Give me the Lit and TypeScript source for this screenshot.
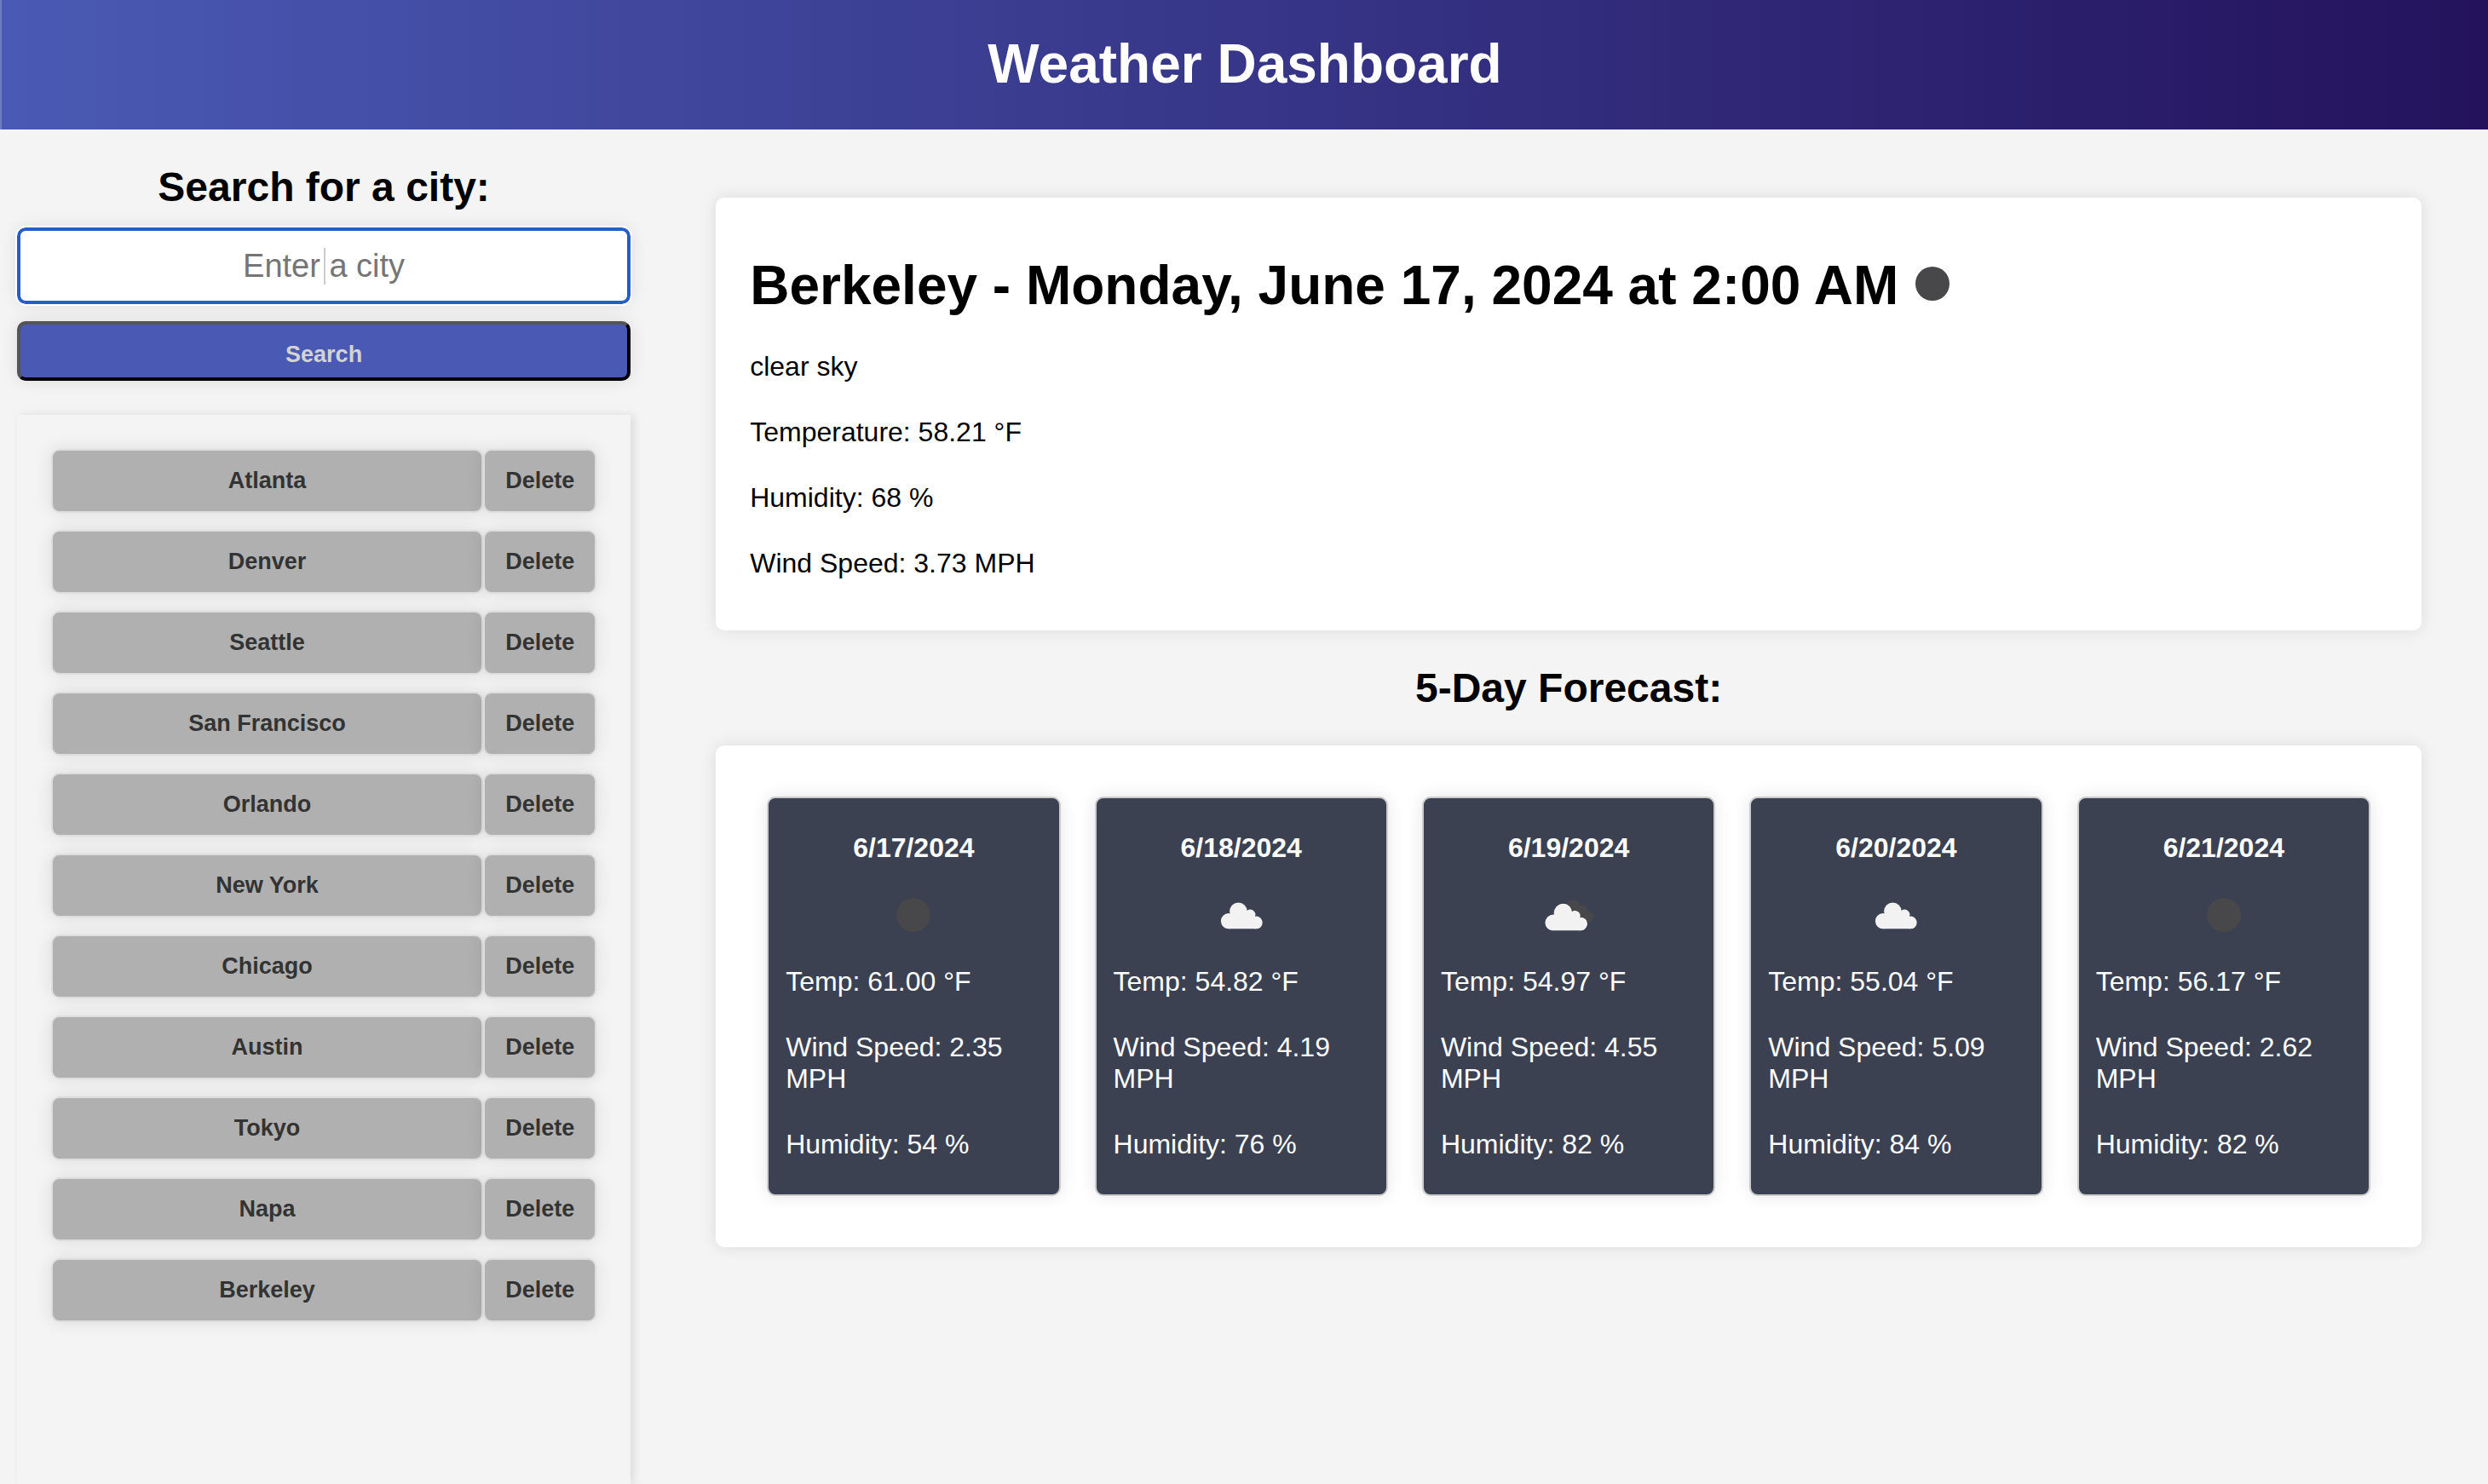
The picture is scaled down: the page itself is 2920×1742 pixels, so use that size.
import { LitElement, html, css, svg } from "lit";
import { customElement, property, state } from "lit/decorators.js";

type Sky = "clear" | "cloud" | "broken";

interface Day {
  date: string;
  sky: Sky;
  temp: string;
  wind: string;
  humidity: number;
}

const CITIES = [
  "Atlanta",
  "Denver",
  "Seattle",
  "San Francisco",
  "Orlando",
  "New York",
  "Chicago",
  "Austin",
  "Tokyo",
  "Napa",
  "Berkeley",
];

const DAYS: Day[] = [
  { date: "6/17/2024", sky: "clear", temp: "61.00", wind: "2.35", humidity: 54 },
  { date: "6/18/2024", sky: "cloud", temp: "54.82", wind: "4.19", humidity: 76 },
  { date: "6/19/2024", sky: "broken", temp: "54.97", wind: "4.55", humidity: 82 },
  { date: "6/20/2024", sky: "cloud", temp: "55.04", wind: "5.09", humidity: 84 },
  { date: "6/21/2024", sky: "clear", temp: "56.17", wind: "2.62", humidity: 82 },
];

const cloud = svg`
  <circle cx="35" cy="27.2" r="9.1"></circle>
  <circle cx="46.4" cy="15.7" r="10.3"></circle>
  <circle cx="60.2" cy="19.8" r="6.2"></circle>
  <circle cx="67.3" cy="28.9" r="7.4"></circle>
  <path d="M35 20H60L67.3 24V36.3H35Z"></path>`;

@customElement("sky-icon")
export class SkyIcon extends LitElement {
  static styles = css`
    :host {
      display: block;
      line-height: 0;
    }
    .dark {
      fill: #48484a;
    }
    .light {
      fill: #f2f2f2;
    }
    .glow {
      fill: #ffffff;
    }
  `;

  @property() sky: Sky = "clear";

  render() {
    if (this.sky === "clear") {
      return html`<svg width="40" height="40" viewBox="0 0 40 40" aria-hidden="true">
        <circle class="dark" cx="20" cy="20" r="20"></circle>
      </svg>`;
    }
    if (this.sky === "cloud") {
      return html`<svg width="100" height="40" viewBox="0 0 100 40" aria-hidden="true">
        <g class="light">${cloud}</g>
      </svg>`;
    }
    return html`<svg width="100" height="40" viewBox="0 0 100 40" aria-hidden="true">
      <g class="dark">
        <circle cx="55" cy="11.3" r="9"></circle>
        <circle cx="66.3" cy="14.6" r="6"></circle>
        <circle cx="73" cy="22" r="6.3"></circle>
        <path d="M50 12L66 9L73 22L71 28L55 26Z"></path>
      </g>
      <g class="glow" transform="translate(-2.8 1.4)">${cloud}</g>
      <g class="light" transform="translate(-3.4 2)">${cloud}</g>
    </svg>`;
  }
}

@customElement("day-card")
export class DayCard extends LitElement {
  static styles = css`
    :host {
      display: flex;
      flex-direction: column;
      gap: 40px;
      box-sizing: border-box;
      padding: 40px 20px;
      border: 2px solid #cccccc;
      border-radius: 10px;
      background: #3b4151;
      box-shadow: 0 0 20px rgba(0, 0, 0, 0.1);
      color: #ffffff;
      font-size: 32px;
      line-height: 37px;
    }
    .date {
      margin: 0;
      font-size: 32px;
      text-align: center;
    }
    .icon {
      align-self: center;
    }
    .fact {
      margin: 0;
    }
  `;

  @property({ attribute: false }) day!: Day;

  render() {
    const { date, sky, temp, wind, humidity } = this.day;
    return html`
      <h3 class="date">${date}</h3>
      <sky-icon class="icon" .sky=${sky}></sky-icon>
      <p class="fact">Temp: ${temp} °F</p>
      <p class="fact">Wind Speed: ${wind} MPH</p>
      <p class="fact">Humidity: ${humidity} %</p>
    `;
  }
}

@customElement("app-root")
export class AppRoot extends LitElement {
  static styles = css`
    :host {
      display: flex;
      flex-direction: column;
      min-height: 100vh;
      background: #f4f4f4;
      color: #000000;
      font-family: "Liberation Sans", Arial, sans-serif;
      font-size: 32px;
      line-height: 37px;
    }
    * {
      box-sizing: border-box;
    }
    .banner {
      padding: 38px 40px 40px;
      border-left: 2px solid #6f7cc0;
      background: linear-gradient(to right, #4a5ab4, #24125c);
      color: #ffffff;
      text-align: center;
    }
    .title {
      margin: 0;
      font-size: 64px;
      line-height: 74px;
    }
    .layout {
      flex: 1;
      display: grid;
      grid-template-columns: 26% 1fr;
    }
    .sidebar {
      display: flex;
      flex-direction: column;
      padding: 40px 19px 0 20px;
    }
    .form {
      display: flex;
      flex-direction: column;
      gap: 20px;
      margin-bottom: 40px;
    }
    .subtitle {
      margin: 0;
      font-size: 48px;
      font-weight: bold;
      line-height: 55px;
      text-align: center;
    }
    .field {
      position: relative;
      display: flex;
    }
    .city {
      flex: 1;
      min-width: 0;
      height: 90px;
      padding: 0 20px;
      border: 4px solid #265dc8;
      border-radius: 10px;
      outline: 2px solid #ffffff;
      background: #ffffff;
      box-shadow: 0 0 20px rgba(0, 0, 0, 0.1);
      font: inherit;
      font-size: 38px;
      text-align: center;
    }
    .city::placeholder {
      color: #757575;
      opacity: 1;
    }
    .caret {
      position: absolute;
      top: 24px;
      left: 50%;
      width: 2px;
      height: 43px;
      background: #cccccc;
      pointer-events: none;
    }
    .search {
      height: 70px;
      padding: 8px 20px 0;
      border: 4px solid;
      border-color: #555555 #000000 #000000 #555555;
      border-radius: 10px;
      background: #4a5ab4;
      box-shadow: 0 0 20px rgba(0, 0, 0, 0.1);
      color: #d3d3d3;
      font: inherit;
      font-size: 27px;
      font-weight: bold;
      line-height: 31px;
    }
    .history {
      flex: 1;
      display: flex;
      flex-direction: column;
      gap: 20px;
      margin: 0;
      padding: 40px;
      box-shadow: 4px 0 10px rgba(0, 0, 0, 0.1);
      list-style: none;
    }
    .entry {
      display: flex;
    }
    .pick,
    .remove {
      padding: 20px 24px;
      border: 2px solid #dddddd;
      border-radius: 10px;
      background: #b0b0b0;
      box-shadow: 0 0 20px rgba(0, 0, 0, 0.1);
      color: #333333;
      font: inherit;
      font-size: 27px;
      font-weight: bold;
      line-height: 31px;
    }
    .pick {
      flex: 1;
    }
    .content {
      display: flex;
      flex-direction: column;
      gap: 40px;
      padding: 80px 78px 80px 81px;
    }
    .panel {
      border-radius: 10px;
      background: #ffffff;
      box-shadow: 0 0 20px rgba(0, 0, 0, 0.1);
    }
    .current {
      display: flex;
      flex-direction: column;
      gap: 40px;
      padding: 66px 40px 60px;
    }
    .headline {
      display: flex;
      align-items: center;
      gap: 20px;
      margin: 0;
      font-size: 64px;
      line-height: 74px;
    }
    .now {
      padding-bottom: 4px;
    }
    .fact {
      margin: 0;
    }
    .forecast {
      display: grid;
      grid-template-columns: repeat(5, 1fr);
      gap: 40px;
      padding: 60px;
    }
  `;

  @state() private cities = CITIES;

  private remove(city: string) {
    this.cities = this.cities.filter((c) => c !== city);
  }

  private add(event: Event) {
    event.preventDefault();
    const input = this.renderRoot.querySelector<HTMLInputElement>("#city")!;
    const name = input.value.trim();
    if (name && !this.cities.includes(name)) this.cities = [...this.cities, name];
    input.value = "";
  }

  render() {
    return html`
      <header class="banner"><h1 class="title">Weather Dashboard</h1></header>
      <div class="layout">
        <aside class="sidebar">
          <form class="form" @submit=${this.add}>
            <label class="subtitle" for="city">Search for a city:</label>
            <div class="field">
              <input class="city" id="city" type="text" placeholder="Enter a city" autocomplete="off" />
              <span class="caret"></span>
            </div>
            <button class="search" type="submit">Search</button>
          </form>
          <ul class="history">
            ${this.cities.map(
              (city) => html`<li class="entry">
                <button class="pick" type="button">${city}</button>
                <button class="remove" type="button" @click=${() => this.remove(city)}>Delete</button>
              </li>`
            )}
          </ul>
        </aside>
        <main class="content">
          <section class="panel current">
            <h2 class="headline">
              <span>Berkeley - Monday, June 17, 2024 at 2:00 AM</span>
              <sky-icon class="now" sky="clear"></sky-icon>
            </h2>
            <p class="fact">clear sky</p>
            <p class="fact">Temperature: 58.21 °F</p>
            <p class="fact">Humidity: 68 %</p>
            <p class="fact">Wind Speed: 3.73 MPH</p>
          </section>
          <h2 class="subtitle">5-Day Forecast:</h2>
          <section class="panel forecast">
            ${DAYS.map((day) => html`<day-card .day=${day}></day-card>`)}
          </section>
        </main>
      </div>
    `;
  }
}
